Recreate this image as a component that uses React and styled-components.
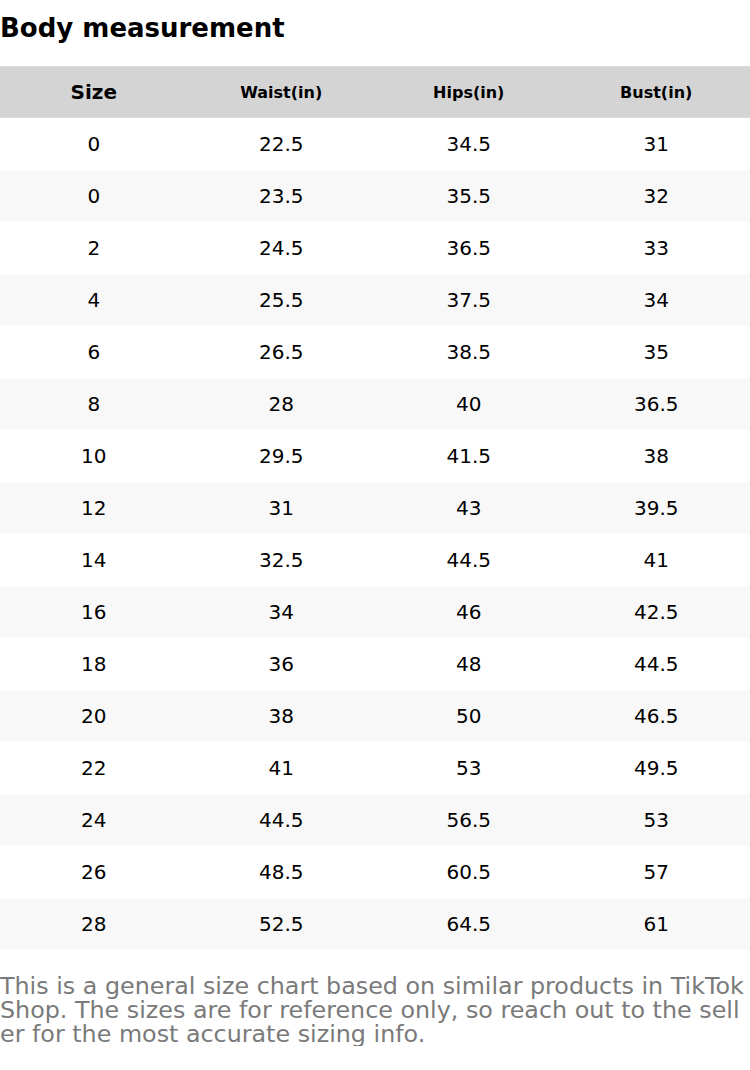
import styled, { createGlobalStyle } from 'styled-components';

const rows = [
  ['0', '22.5', '34.5', '31'],
  ['0', '23.5', '35.5', '32'],
  ['2', '24.5', '36.5', '33'],
  ['4', '25.5', '37.5', '34'],
  ['6', '26.5', '38.5', '35'],
  ['8', '28', '40', '36.5'],
  ['10', '29.5', '41.5', '38'],
  ['12', '31', '43', '39.5'],
  ['14', '32.5', '44.5', '41'],
  ['16', '34', '46', '42.5'],
  ['18', '36', '48', '44.5'],
  ['20', '38', '50', '46.5'],
  ['22', '41', '53', '49.5'],
  ['24', '44.5', '56.5', '53'],
  ['26', '48.5', '60.5', '57'],
  ['28', '52.5', '64.5', '61'],
];

export default function App() {
  return (
    <>
      <GlobalStyle />
      <Page>
        <Title>Body measurement</Title>
        <Table>
          <HeadRow>
            <HeadCell big>Size</HeadCell>
            <HeadCell>Waist(in)</HeadCell>
            <HeadCell>Hips(in)</HeadCell>
            <HeadCell>Bust(in)</HeadCell>
          </HeadRow>
          {rows.map((r, i) => (
            <Row key={i} striped={i % 2 === 1}>
              {r.map((v, j) => (
                <Cell key={j}>{v}</Cell>
              ))}
            </Row>
          ))}
        </Table>
        <Note>
          This is a general size chart based on similar products in TikTok Shop. The sizes are for reference only, so reach out to the seller for the most accurate sizing info.
        </Note>
      </Page>
    </>
  );
}

const GlobalStyle = createGlobalStyle`
  body {
    margin: 0;
    background: #fff;
    font-family: "DejaVu Sans", sans-serif;
  }
`;

const Page = styled.div`
  width: 750px;
  display: flex;
  flex-direction: column;
`;

const Title = styled.h1`
  margin: 0;
  height: 66px;
  padding-top: 10px;
  box-sizing: border-box;
  font-size: 26px;
  font-weight: bold;
  line-height: 36px;
  color: #000;
`;

const Table = styled.div`
  display: flex;
  flex-direction: column;
`;

const HeadRow = styled.div`
  display: grid;
  grid-template-columns: repeat(4, 1fr);
  height: 52px;
  background: #d4d4d4;
  border-top: 1px solid #dcdcdc;
  border-bottom: 1px solid #dcdcdc;
  box-sizing: border-box;
`;

const HeadCell = styled.div`
  display: flex;
  align-items: center;
  justify-content: center;
  font-weight: bold;
  font-size: ${props => props.big ? '20px' : '16px'};
  color: #000;
`;

const Row = styled.div`
  display: grid;
  grid-template-columns: repeat(4, 1fr);
  height: 52px;
  background: ${props => props.striped ? '#f8f8f8' : '#fff'};
`;

const Cell = styled.div`
  display: flex;
  align-items: center;
  justify-content: center;
  font-size: 20px;
  color: #000;
`;

const Note = styled.p`
  margin: 0;
  padding-top: 24px;
  font-size: 23.8px;
  line-height: 24px;
  color: #7a7a7a;
  word-break: break-all;
`;
